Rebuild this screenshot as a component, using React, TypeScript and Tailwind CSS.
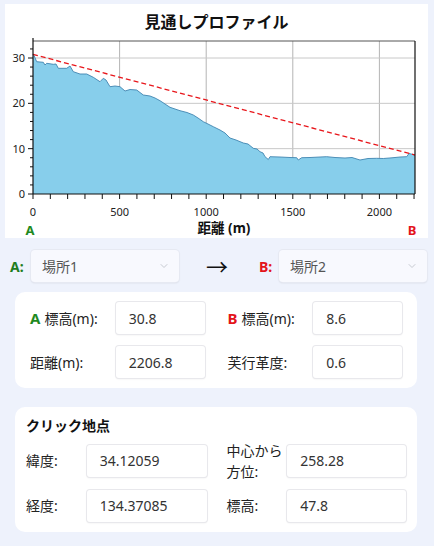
import React from "react";
import { ChevronDown } from "lucide-react";

const font = { fontFamily: '"Noto Sans", "Noto Sans CJK JP", sans-serif' };

// distance (m) -> x, elevation (m) -> y, in page pixels
const X0 = 33;
const X1 = 415;
const Y0 = 194;
const YTOP = 41;
const sx = (d: number) => X0 + d * 0.1732;
const sy = (e: number) => Y0 - e * 4.533;

const profile: [number, number][] = [
  [33, 54.5], [34, 55.5], [36.7, 61.7], [43.3, 62.3], [45, 65], [46.7, 63.3],
  [53.3, 64.3], [56, 64], [58.3, 68.3], [66.7, 68.3], [70, 66], [73.3, 71.7],
  [80, 74], [86.7, 74], [93.3, 77.3], [100, 81.7], [103.3, 78.3], [106, 80],
  [110, 86.7], [115, 86], [120, 86.7], [125, 91], [130, 89.5], [136.7, 90],
  [143.3, 95], [150, 96], [155, 98], [160, 100.7], [165, 104], [170, 107.3],
  [175, 109], [180, 110.7], [187, 112.5], [193.3, 115], [198, 118],
  [203.3, 121.7], [208, 124], [213.3, 126.7], [220, 130], [225, 133],
  [230, 138], [236, 140], [243.3, 143], [248, 144], [253.3, 148.3],
  [257, 149], [260, 151.7], [263, 153], [265, 156.7], [268.3, 159.5],
  [270, 156.7], [280, 157], [290, 157.5], [296.7, 157.7], [298.3, 160],
  [301.7, 157.7], [310, 157.5], [320, 157], [326.7, 156.7], [335, 157.5],
  [345, 158], [352, 157.5], [360, 160], [368, 158.5], [376.7, 158.3],
  [383.3, 158.5], [392, 157.8], [400, 157], [406.7, 156.7], [409, 153.5],
  [411, 154], [415, 155],
];

const line = profile.map(([x, y], i) => `${i ? "L" : "M"}${x} ${y}`).join(" ");
const area = `${line} L${X1} ${Y0} L${X0} ${Y0} Z`;

const ProfileChart = () => {
  const xMajor = [0, 500, 1000, 1500, 2000];
  const xMinor = Array.from({ length: 23 }, (_, i) => i * 100);
  const yMajor = [0, 10, 20, 30];
  const yMinor = Array.from({ length: 17 }, (_, i) => i * 2);

  return (
    <svg viewBox="5 34 423 205" width={423} height={205} className="block">
      {/* grid */}
      {xMajor.slice(1).map((d) => (
        <line key={d} x1={sx(d)} x2={sx(d)} y1={YTOP} y2={Y0} stroke="#b4b4b4" strokeWidth={1} />
      ))}
      {yMajor.slice(1).map((e) => (
        <line key={e} x1={X0} x2={X1} y1={sy(e)} y2={sy(e)} stroke="#c8c8c8" strokeWidth={1} />
      ))}

      {/* terrain */}
      <path d={area} fill="#87ceeb" />
      <path d={line} fill="none" stroke="#3f84b0" strokeWidth={0.9} />

      {/* line of sight */}
      <line x1={X0} y1={sy(30.8)} x2={X1} y2={sy(8.6)} stroke="#e8161b" strokeWidth={1.3} strokeDasharray="5 3" />

      {/* frame */}
      <line x1={X0} x2={X1} y1={YTOP} y2={YTOP} stroke="#555" strokeWidth={1} />
      <line x1={X1} x2={X1} y1={YTOP} y2={Y0} stroke="#111" strokeWidth={1.2} />
      <line x1={X0} x2={X0} y1={YTOP - 3} y2={Y0} stroke="#111" strokeWidth={1.2} />
      <line x1={X0} x2={X1} y1={Y0} y2={Y0} stroke="#111" strokeWidth={1.2} />

      {/* ticks */}
      {yMinor.map((e) => (
        <line key={e} x1={yMajor.includes(e) ? 28 : 30} x2={X0} y1={sy(e)} y2={sy(e)} stroke="#111" strokeWidth={1} />
      ))}
      {xMinor.map((d) => (
        <line key={d} x1={sx(d)} x2={sx(d)} y1={Y0} y2={Y0 + 5} stroke="#111" strokeWidth={1} />
      ))}

      <g fontSize={11} fill="#222" style={font}>
        {yMajor.map((e) => (
          <text key={e} x={25} y={sy(e) + 4} textAnchor="end">
            {e}
          </text>
        ))}
        {xMajor.map((d) => (
          <text key={d} x={sx(d)} y={216} textAnchor="middle">
            {d}
          </text>
        ))}
      </g>

      <text x={224} y={233} textAnchor="middle" fontSize={13.5} fontWeight={700} fill="#111" style={font}>
        距離 (m)
      </text>
      <text x={30} y={235} textAnchor="middle" fontSize={13} fontWeight={700} fill="#1f8a1f" style={font}>
        A
      </text>
      <text x={412} y={235} textAnchor="middle" fontSize={13} fontWeight={700} fill="#e3141b" style={font}>
        B
      </text>
    </svg>
  );
};

const Select = ({ value }: { value: string }) => (
  <div className="flex h-[32px] w-[148px] items-center justify-between rounded-[4px] bg-[#f8f9fe] pl-[11px] pr-[9px] text-[14px] text-[#555] shadow-[0_1px_2px_rgba(0,0,0,0.12)] ring-1 ring-[#e6e9f2]">
    <span>{value}</span>
    <ChevronDown size={12} strokeWidth={1.5} className="text-[#b5b9c2]" />
  </div>
);

const Field = ({ value, w }: { value: string; w: string }) => (
  <div
    className={`flex h-[32px] ${w} items-center rounded-[3px] bg-white pl-[13px] text-[14px] text-[#333] shadow-[0_1px_2px_rgba(0,0,0,0.1)] ring-1 ring-[#e8e8ec]`}
  >
    {value}
  </div>
);

export default function App() {
  return (
    <div className="h-[546px] w-[434px] overflow-hidden bg-[#eef2fc] pt-[4px]" style={font}>
      {/* chart panel */}
      <div className="mx-[5px] flex h-[234px] w-[423px] flex-col overflow-hidden bg-white">
        <div className="pt-[7px] text-center text-[16px] leading-[22px] font-bold text-[#111]">見通しプロファイル</div>
        <div className="mt-[1px]">
          <ProfileChart />
        </div>
      </div>

      {/* A -> B pickers */}
      <div className="mt-[12px] flex h-[32px] items-center">
        <span className="ml-[10px] w-[21px] text-[14px] font-bold text-[#1f7d1f]">A:</span>
        <Select value="場所1" />
        <span className="ml-[27px] w-[53px] text-[22px] leading-none text-[#111]">→</span>
        <span className="w-[20px] text-[14px] font-bold text-[#e3141b]">B:</span>
        <Select value="場所2" />
      </div>

      {/* elevation / distance */}
      <div className="mx-[15px] mt-[10px] flex h-[96px] w-[402px] flex-col gap-[12px] rounded-[10px] bg-white px-[15px] pt-[10px]">
        <div className="flex items-center">
          <span className="w-[87px] text-[14px] text-[#222]">
            <b className="mr-[4px] text-[15px] text-[#1f8a1f]">A</b>標高(m):
          </span>
          <Field value="30.8" w="w-[90px]" />
          <span className="ml-[23px] w-[87px] text-[14px] text-[#222]">
            <b className="mr-[4px] text-[15px] text-[#e3141b]">B</b>標高(m):
          </span>
          <Field value="8.6" w="w-[90px]" />
        </div>
        <div className="flex items-center">
          <span className="w-[87px] text-[14px] text-[#222]">距離(m):</span>
          <Field value="2206.8" w="w-[90px]" />
          <span className="ml-[23px] w-[87px] text-[14px] text-[#222]">芙行革度:</span>
          <Field value="0.6" w="w-[90px]" />
        </div>
      </div>

      {/* clicked point */}
      <div className="mx-[15px] mt-[19px] flex h-[125px] w-[402px] flex-col rounded-[10px] bg-white px-[11px] pt-[9px]">
        <div className="text-[14px] leading-[20px] font-bold text-[#111]">クリック地点</div>
        <div className="mt-[8px] flex flex-col gap-[12px]">
          <div className="flex h-[33px] items-center">
            <span className="w-[61px] text-[14px] text-[#222]">緯度:</span>
            <Field value="34.12059" w="w-[120px]" />
            <span className="ml-[20px] w-[61px] text-[14px] leading-[21px] text-[#222]">
              中心から
              <br />
              方位:
            </span>
            <Field value="258.28" w="w-[119px]" />
          </div>
          <div className="flex h-[33px] items-center">
            <span className="w-[61px] text-[14px] text-[#222]">経度:</span>
            <Field value="134.37085" w="w-[120px]" />
            <span className="ml-[20px] w-[61px] text-[14px] text-[#222]">標高:</span>
            <Field value="47.8" w="w-[119px]" />
          </div>
        </div>
      </div>
    </div>
  );
}
